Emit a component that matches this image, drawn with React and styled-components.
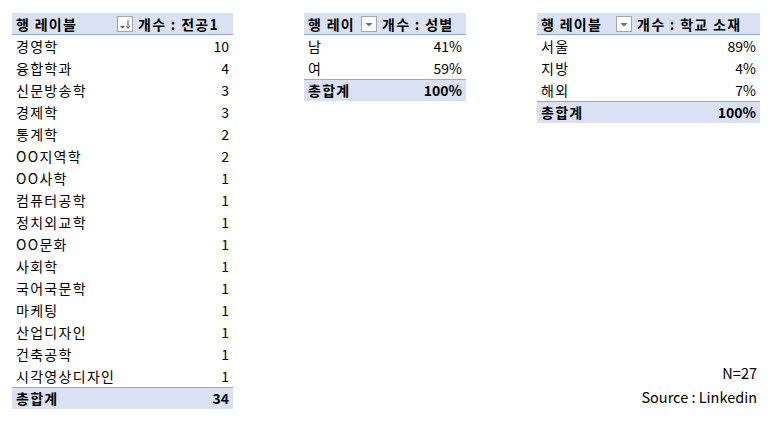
import React from 'react';
import styled, { createGlobalStyle } from 'styled-components';

const GlobalStyle = createGlobalStyle`
  body {
    margin: 0;
    background: #fff;
    font-family: "Noto Sans CJK KR", "Noto Sans", sans-serif;
    color: #000;
  }
`;

const Page = styled.div`
  display: flex;
  align-items: flex-start;
  gap: 71px;
  padding: 13px 0 0 12px;
  width: 775px;
  height: 421px;
  box-sizing: border-box;
`;

const RightColumn = styled.div`
  display: flex;
  flex-direction: column;
  justify-content: space-between;
  height: 396px;
`;

const Table = styled.div`
  display: grid;
  grid-template-columns: ${(p) => p.$cols};
  font-size: 14px;
  line-height: 22px;
`;

// korean text in the original is wider (Malgun Gothic), so space it out a bit
const HeadCell = styled.div`
  display: flex;
  align-items: center;
  height: 21px;
  background: #d9e1f2;
  border-bottom: 1px solid #8ea9db;
  font-weight: 700;
  padding-left: 4px;
  letter-spacing: 1.3px;
  white-space: nowrap;
`;

const HeadLabel = styled.span`
  flex: 1;
  white-space: nowrap;
`;

const DropBox = styled.span`
  flex: none;
  width: 14px;
  height: 14px;
  margin-right: 1px;
  border: 1px solid #a6a6a6;
  background: #fff;
  display: flex;
  align-items: center;
  justify-content: center;
`;

const Cell = styled.div`
  height: 22px;
  padding: 0 4px;
  text-align: ${(p) => (p.$num ? 'right' : 'left')};
  letter-spacing: ${(p) => (p.$num ? '0' : '1.3px')};
  white-space: nowrap;
`;

const TotalCell = styled.div`
  height: 21px;
  line-height: 21px;
  background: #d9e1f2;
  border-top: 1px solid #8ea9db;
  font-weight: 700;
  padding: 0 4px;
  text-align: ${(p) => (p.$num ? 'right' : 'left')};
  letter-spacing: ${(p) => (p.$num ? '0' : '1.3px')};
`;

const Note = styled.div`
  font-size: 14.5px;
  line-height: 24px;
  text-align: right;
  padding-right: 3px;
`;

const SortIcon = () => (
  <svg width="12" height="12" viewBox="0 0 12 12">
    <path d="M1 8h5l-2.5 2.5z" fill="#595959" />
    <path d="M9 2v8" stroke="#595959" strokeWidth="1" />
    <path d="M7 8l2 2.5 2-2.5" stroke="#595959" strokeWidth="1" fill="none" />
  </svg>
);

const FilterIcon = () => (
  <svg width="12" height="12" viewBox="0 0 12 12">
    <path d="M2.5 5h7L6 8.5z" fill="#6d6d6d" />
  </svg>
);

const PivotTable = ({ cols, label, value, rows, total, sorted }) => (
  <Table $cols={cols}>
    <HeadCell>
      <HeadLabel>{label}</HeadLabel>
      <DropBox>{sorted ? <SortIcon /> : <FilterIcon />}</DropBox>
    </HeadCell>
    <HeadCell>{value}</HeadCell>
    {rows.map(([name, v]) => (
      <React.Fragment key={name}>
        <Cell>{name}</Cell>
        <Cell $num>{v}</Cell>
      </React.Fragment>
    ))}
    <TotalCell>총합계</TotalCell>
    <TotalCell $num>{total}</TotalCell>
  </Table>
);

const majors = [
  ['경영학', 10],
  ['융합학과', 4],
  ['신문방송학', 3],
  ['경제학', 3],
  ['통계학', 2],
  ['OO지역학', 2],
  ['OO사학', 1],
  ['컴퓨터공학', 1],
  ['정치외교학', 1],
  ['OO문화', 1],
  ['사회학', 1],
  ['국어국문학', 1],
  ['마케팅', 1],
  ['산업디자인', 1],
  ['건축공학', 1],
  ['시각영상디자인', 1],
];

const gender = [
  ['남', '41%'],
  ['여', '59%'],
];

const school = [
  ['서울', '89%'],
  ['지방', '4%'],
  ['해외', '7%'],
];

const App = () => (
  <>
    <GlobalStyle />
    <Page>
      <PivotTable
        cols="122px 99px"
        label="행 레이블"
        value="개수 : 전공1"
        rows={majors}
        total="34"
        sorted
      />
      {/* the label is cut off by the filter button in the sheet */}
      <PivotTable cols="74px 88px" label="행 레이" value="개수 : 성별" rows={gender} total="100%" />
      <RightColumn>
        <PivotTable
          cols="96px 127px"
          label="행 레이블"
          value="개수 : 학교 소재"
          rows={school}
          total="100%"
        />
        <Note>
          N=27
          <br />
          Source : Linkedin
        </Note>
      </RightColumn>
    </Page>
  </>
);

export default App;
